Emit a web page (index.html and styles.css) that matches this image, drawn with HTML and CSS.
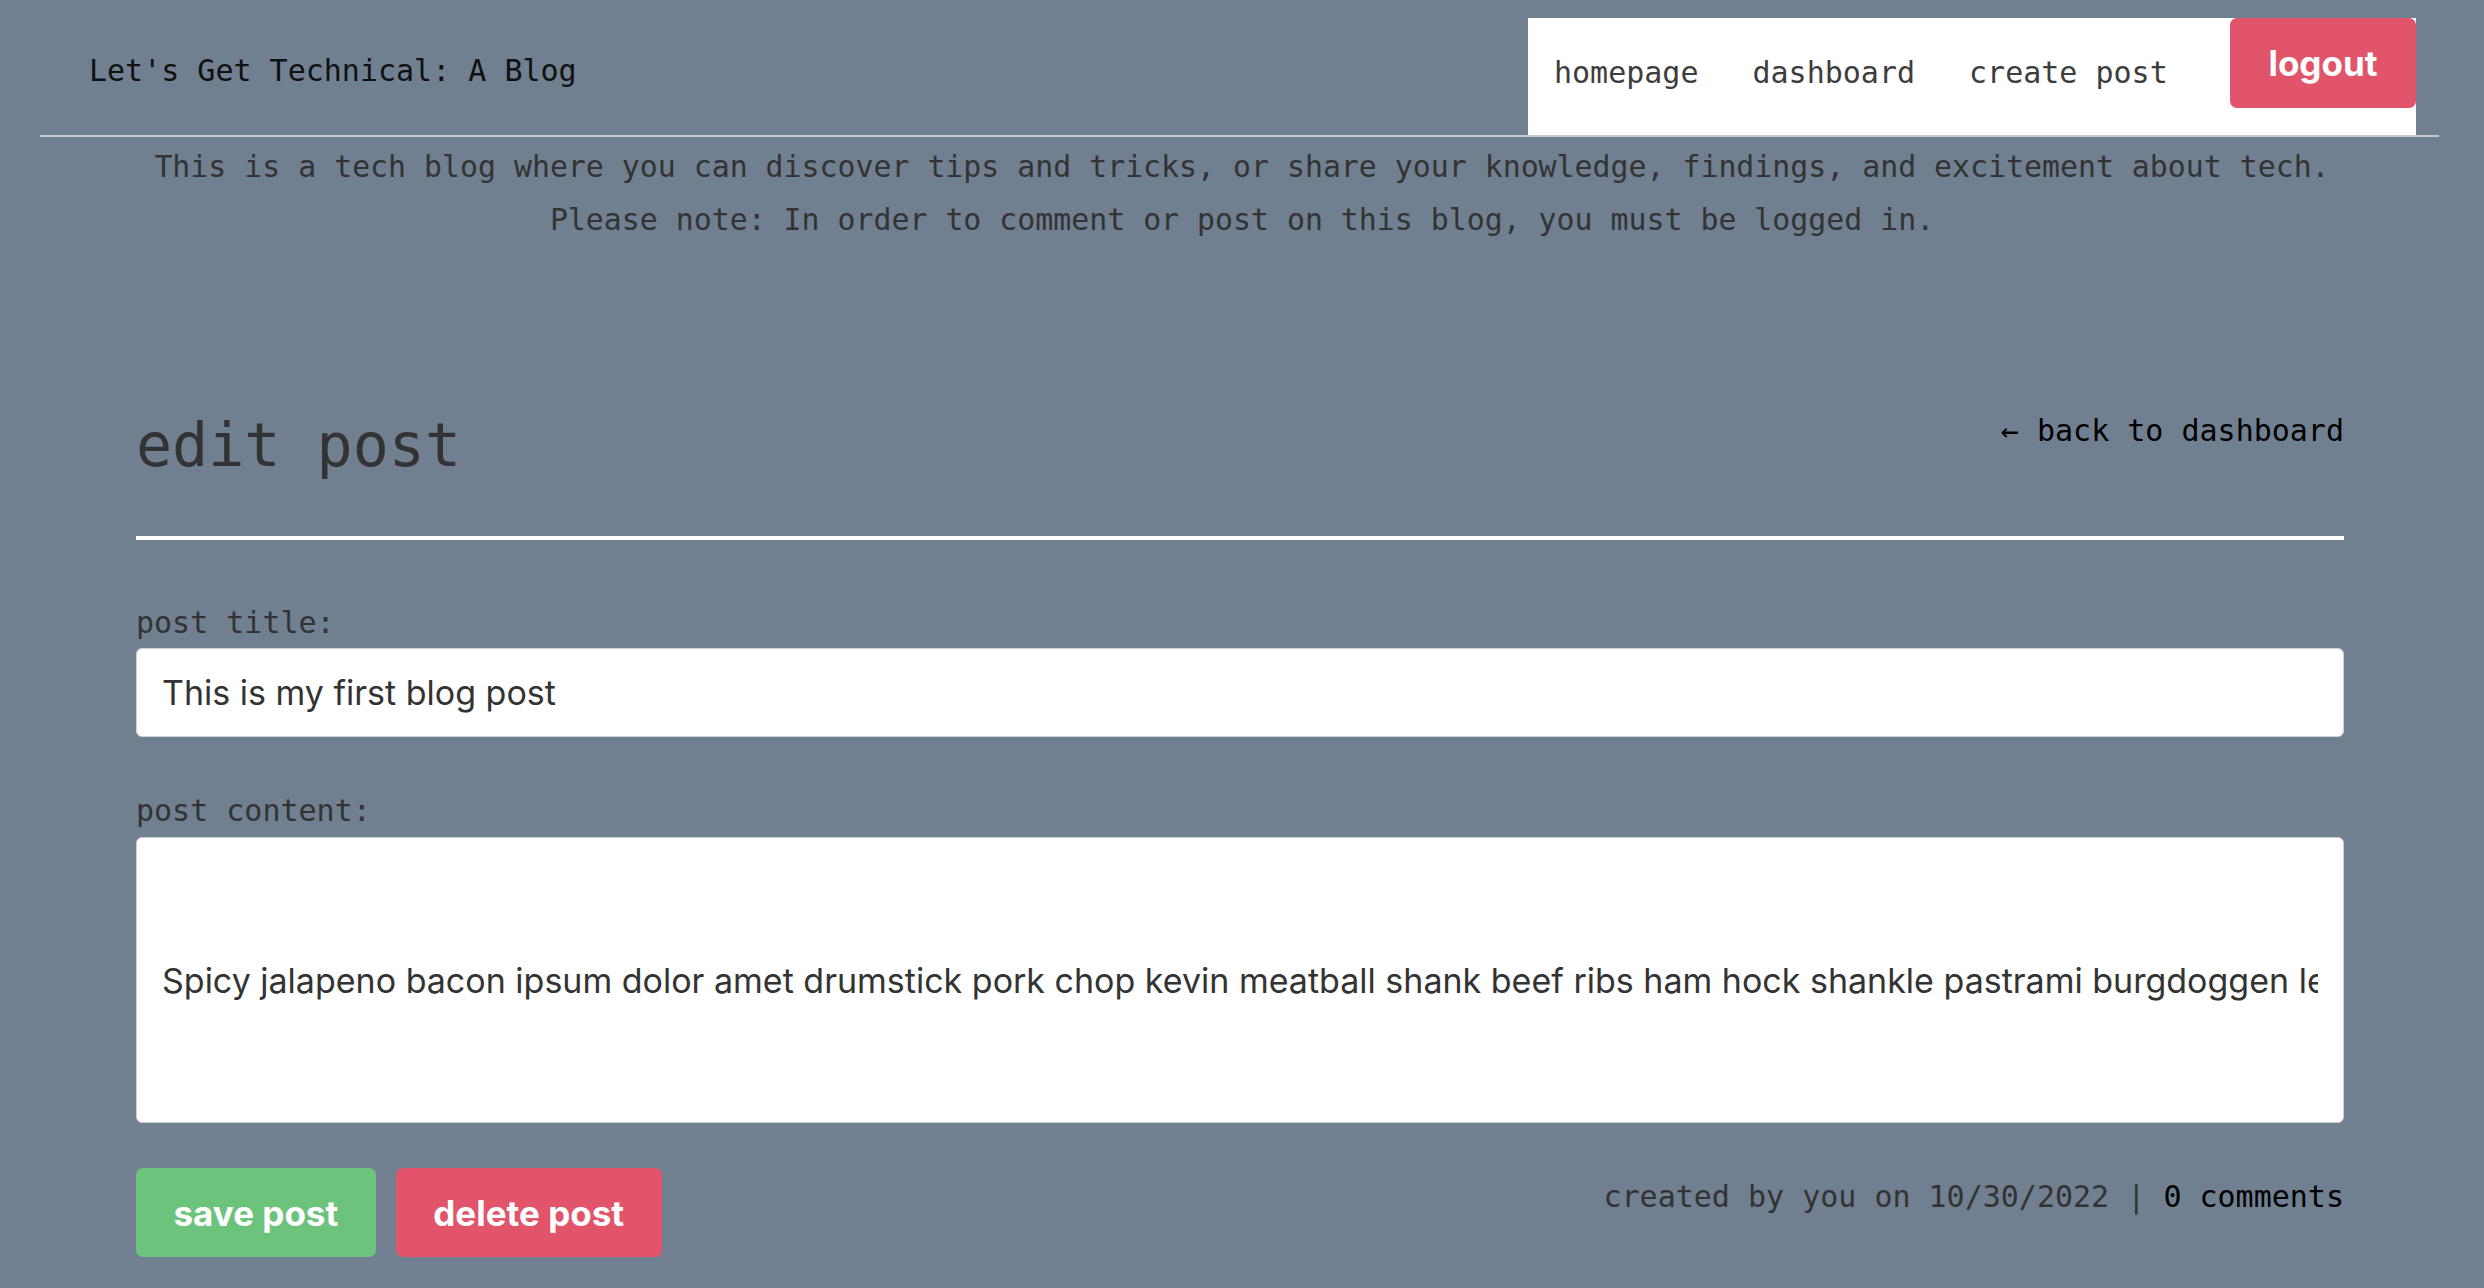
FILE: index.html
```html
<!DOCTYPE html>
<html lang="en">
<head>
<meta charset="utf-8">
<title>Let's Get Technical: A Blog</title>
<link rel="stylesheet" href="styles.css">
</head>
<body>
<header class="site-header">
  <h1 class="site-title">Let's Get Technical: A Blog</h1>
  <nav class="site-nav">
    <a class="nav-link" href="#">homepage</a>
    <a class="nav-link" href="#">dashboard</a>
    <a class="nav-link" href="#">create post</a>
    <button class="btn btn-red btn-logout" type="button">logout</button>
  </nav>
</header>
<section class="intro">
  <p>This is a tech blog where you can discover tips and tricks, or share your knowledge, findings, and excitement about tech.</p>
  <p>Please note: In order to comment or post on this blog, you must be logged in.</p>
</section>
<main class="editor">
  <div class="editor-head">
    <h2 class="editor-title">edit post</h2>
    <a class="back-link" href="#">&larr; back to dashboard</a>
  </div>
  <form class="edit-form">
    <label class="field-label" for="post-title">post title:</label>
    <input class="field-input" id="post-title" type="text" value="This is my first blog post">
    <label class="field-label field-label-content" for="post-content">post content:</label>
    <input class="field-input field-content" id="post-content" type="text" value="Spicy jalapeno bacon ipsum dolor amet drumstick pork chop kevin meatball shank beef ribs ham hock shankle pastrami burgdoggen leberkas tail. Pancetta biltong short loin.">
    <div class="form-footer">
      <div class="actions">
        <button class="btn btn-green" type="button">save post</button>
        <button class="btn btn-red" type="button">delete post</button>
      </div>
      <p class="meta">created by you on 10/30/2022 | <a class="meta-link" href="#">0 comments</a></p>
    </div>
  </form>
</main>
</body>
</html>
```
FILE: styles.css
```css
html, body {
  margin: 0;
  background: #708090;
}

body {
  font-family: "DejaVu Sans Mono", monospace;
  font-size: 30px;
  color: #333;
}

.site-header {
  display: flex;
  justify-content: space-between;
  margin: 0 45px 0 40px;
  padding-top: 18px;
  height: 117px;
  border-bottom: 2px solid #c9c9c9;
}

.site-title {
  margin: 35px 0 0 49px;
  font-size: 30px;
  font-weight: normal;
  line-height: 36px;
  color: #111;
}

.site-nav {
  display: flex;
  align-items: flex-start;
  gap: 54px;
  width: 888px;
  box-sizing: border-box;
  padding-left: 26px;
  margin-right: 23px;
  background: #fff;
}

.nav-link {
  margin-top: 37px;
  line-height: 36px;
  color: #3d3d3d;
  text-decoration: none;
}

.btn {
  font-family: Inter, "Liberation Sans", sans-serif;
  font-weight: 700;
  font-size: 35px;
  color: #fff;
  border: 0;
  border-radius: 7px;
  padding: 0 37.5px;
  height: 89px;
  cursor: pointer;
}

.btn-red {
  background: #e1546a;
}

.btn-green {
  background: #6cc47c;
}

.btn-logout {
  margin-left: auto;
  width: 186px;
  height: 90px;
  padding: 0;
}

.intro {
  margin-top: 3px;
  text-align: center;
  font-size: 29.87px;
  line-height: 53px;
  color: #333;
}

.intro p {
  margin: 0;
}

.editor {
  margin: 164px 140px 0 136px;
}

.editor-head {
  display: flex;
  justify-content: space-between;
  align-items: flex-start;
  padding-bottom: 56px;
  border-bottom: 4px solid #fff;
}

.editor-title {
  margin: 0;
  font-size: 60px;
  font-weight: normal;
  line-height: 70px;
  color: #333;
}

.back-link {
  margin-top: 3px;
  line-height: 36px;
  color: #000;
  text-decoration: none;
}

.edit-form {
  display: flex;
  flex-direction: column;
}

.field-label {
  margin-top: 65px;
  margin-bottom: 7px;
  line-height: 36px;
  color: #333;
}

.field-label-content {
  margin-top: 56px;
  margin-bottom: 8px;
}

.field-input {
  height: 89px;
  box-sizing: border-box;
  border: 1px solid #d0d0d0;
  border-radius: 6px;
  padding: 0 25px;
  background: #fff;
  font-family: Inter, "Liberation Sans", sans-serif;
  font-size: 34px;
  color: #333;
  outline: none;
}

.field-content {
  height: 286px;
}

.form-footer {
  display: flex;
  justify-content: space-between;
  align-items: flex-start;
  margin-top: 45px;
}

.actions {
  display: flex;
  gap: 20px;
}

.meta {
  margin: 11px 0 0;
  line-height: 36px;
  color: #333;
}

.meta-link {
  color: #000;
  text-decoration: none;
}
```
